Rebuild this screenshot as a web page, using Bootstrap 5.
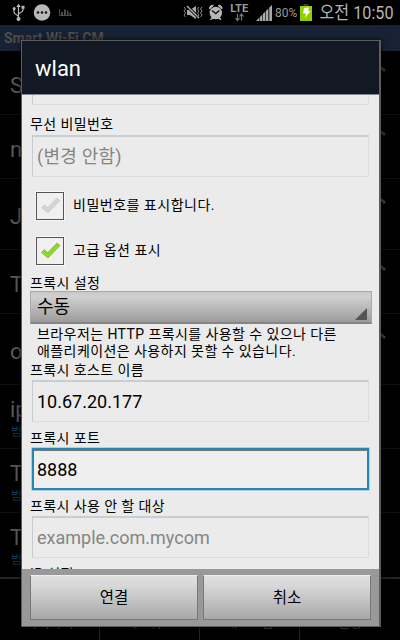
<!DOCTYPE html>
<html lang="ko">
<head>
<meta charset="utf-8">
<meta name="viewport" content="width=device-width, initial-scale=1">
<title>wlan</title>
<link href="https://cdn.jsdelivr.net/npm/bootstrap@5.3.0/dist/css/bootstrap.min.css" rel="stylesheet">
<style>
body{width:400px;height:640px;background:#000;font-family:Roboto,"Noto Sans CJK KR",sans-serif;color:#000}
.screen{width:400px;height:640px}
.status{height:25px;color:#b4b4b4;flex:none}
.status svg{flex:none;display:block}
.alerts{margin-left:102px}
.pct{font-size:12px;line-height:25px;width:23px;margin-left:3px;color:#999;padding-top:1px}
.batt{margin-left:2px}
.clock{font-size:18px;line-height:25px;margin-left:7px;white-space:nowrap}
.appbar{height:26px;background:#172334;color:#504e4b;font-size:14px;font-weight:700;line-height:26px;padding-left:4px;flex:none}
.net{height:64px;border-bottom:1px solid #111;padding:6px 0 0 10px;color:#5b5b5b;font-size:22px;line-height:24px;flex:none}
.net.tall{height:71px}
.net small{font-size:12px;line-height:20px;color:#0d3d56;padding-left:1px}
.sig{width:6px;height:6px;margin-right:13px;margin-top:-33px}
.tabs{border-top:2px solid #242424;color:#444;font-size:13px}
.tabs>div{padding-top:34px;line-height:20px;border-right:1px solid #242424}
.tabs>div:last-child{border:0}
.dialog{left:21px;top:40px;width:360px;height:587px;border:1px solid #5c5c5c;border-right-width:2px;background:#ebebeb;box-shadow:0 0 7px rgba(0,0,0,.75)}
.dhead{height:54px;background:#121925;color:#fff;font-size:22px;line-height:56px;padding-left:13px;border-bottom:1px solid #85878d;flex:none}
.dbody{flex:1 1 0;min-height:0;overflow:hidden;padding-left:8px}
.lbl{font-size:14px;line-height:16px;height:18px;white-space:nowrap;letter-spacing:.4px}
.lbl.first{margin-top:11px;height:19px;line-height:17px}
.lbl.drop{line-height:20px}
.lbl.host{margin-top:3px}
.fld{width:337px;height:42px;margin-left:2px;border:1px solid #dcdddf;border-top:2px solid #c9ced2;border-left-color:#c5cbd0;background:#ebebeb;font-size:18px;line-height:40px;padding-left:4px;white-space:nowrap}
.fld.stub{height:10px;border-top:0}
.fld.hint{color:#858585}
.fld.ko{letter-spacing:.25px}
.fld.active{background:#efefef;border:2px solid #2585b5;box-shadow:inset 0 1px #777,0 0 0 .5px #72b8d6;line-height:39px;padding-left:3px}
.checks{margin-top:6px}
.chk{height:45px;padding:8px 0 8px 6px;font-size:14px;letter-spacing:.5px}
.box{width:28px;height:28px;border:1px solid #555;background:#f0f0f0;box-shadow:0 0 0 1px #f8f8f8;margin-right:9px}
.box svg{display:block}
.sel{width:342px;height:33px;background:linear-gradient(#c9c9c9,#d0d0d0 15%,#9c9c9c);border:1px solid #aaa;border-bottom:2px solid #858585;font-size:18px;line-height:31px;padding:0 4px 0 6px}
.sel svg{margin-bottom:2px}
.help{font-size:14px;line-height:16.5px;margin:2px 0 0 7px;white-space:nowrap;letter-spacing:.42px}
.dfoot{height:57px;background:#999;padding:6px 8px 7px;gap:5px;flex:none}
.key{flex:1;height:45px;border:1px solid #777;border-top-color:#eee;border-radius:0;background:linear-gradient(#e0e0e0,#d6d6d6 25%,#a8a8a8);font-size:15.5px;line-height:45px;padding:0;color:#000}
</style>
</head>
<body>
<div class="screen position-relative overflow-hidden d-flex flex-column">
  <div class="status d-flex align-items-center">
    <svg width="80" height="25" viewBox="0 0 80 25" fill="none">
      <path d="M18.500 5v14M18.500 17c0-2.500-4.500-2-4.500-5V9M18.500 14.500c0-2 4.500-1.500 4.500-4.500V8" stroke="#b8b8b8" stroke-width="1.200"/>
      <path d="M16.300 7l2.200-3.200L20.700 7zM21.500 5.800h3v3h-3z" fill="#b8b8b8"/><circle cx="14.200" cy="8.500" r="1.500" fill="#b8b8b8"/><circle cx="18.500" cy="19" r="2" fill="#b8b8b8"/>
      <circle cx="42" cy="12.500" r="8.300" fill="#b8b8b8"/><circle cx="38" cy="12.500" r="1.300" fill="#151515"/><circle cx="42" cy="12.500" r="1.300" fill="#151515"/><circle cx="46" cy="12.500" r="1.300" fill="#151515"/>
      <path d="M59.500 9v6.500H72" stroke="#4c4c4c"/><path d="M61 12h2v3h-2zM64 9.500h2V15h-2zM67 10.500h1.500V15H67zM69.500 12.500H71V15h-1.500z" fill="#4c4c4c"/>
    </svg>
    <svg class="alerts" width="90" height="25" viewBox="182 0 90 25" fill="none">
      <path d="M187 10h3l6-4v13l-6-4h-3z" fill="#aaa"/><path d="M187 6l12 12" stroke="#000" stroke-width="3"/><path d="M187 6l12 12" stroke="#aaa" stroke-width="1.400"/>
      <path d="M184 7l1.500 2-1.500 2 1.500 2-1.500 2 1.500 2M199 7l-1.500 2 1.500 2-1.500 2 1.500 2-1.500 2M202 7l-1.500 2 1.500 2-1.500 2 1.500 2-1.500 2" stroke="#888"/>
      <circle cx="215.800" cy="13" r="6.200" fill="#b8b8b8"/><path d="M209.500 9a3 3 0 0 1 4-3.500zM222 9a3 3 0 0 0-4-3.500zM210.500 19.500l2-2.500 2 1zM221 19.500l-2-2.500-2 1z" fill="#b8b8b8" stroke="#b8b8b8"/><path d="M212 10.500l3.800 3 3.500-3" stroke="#151515" stroke-width="1.500"/>
      <text x="230.300" y="11.800" font-size="11.500" font-weight="700" fill="#999" font-family="Roboto" textLength="18" lengthAdjust="spacingAndGlyphs">LTE</text>
      <path d="M237.500 14v6M235.500 18l2 2.500 2-2.500M241.500 20.500v-6M239.500 16.500l2-2.500 2 2.500" stroke="#777" stroke-width="1.200"/>
      <path d="M256 21l16-16v16z" fill="#444"/><path d="M256 21l3-3v3zM260 21v-4l2-2v6zM263 21v-7l2-2v9zM266 21V11l2-2v12zM269.500 21V7.500L272 5v16z" fill="#aaa"/>
    </svg>
    <span class="pct">80%</span>
    <svg width="12" height="25" viewBox="0 0 12 25" class="batt"><path d="M3.500 4h5v2h-5z" fill="#383838"/><path d="M0 6h12v15H0z" fill="#8fd100"/><path d="M4 8l5-.5-1 3.500h2.500L5 18l1-4.500H3z" fill="#fff"/></svg>
    <span class="clock"><svg width="76" height="25" viewBox="0 0 76 25" fill="#b4b4b4" font-size="18"><text x="0.500" y="18.500" textLength="74" lengthAdjust="spacingAndGlyphs">오전 10:50</text></svg></span>
  </div>
  <div class="appbar">Smart Wi-Fi CM</div>
  <div class="net d-flex align-items-center justify-content-between">S<svg class="sig" viewBox="0 0 6 6"><path d="M0 0l5 4-2 2-3-3z" fill="#363d18"/></svg></div>
  <div class="net d-flex align-items-center justify-content-between">n<svg class="sig" viewBox="0 0 6 6"><path d="M0 0l5 4-2 2-3-3z" fill="#363d18"/></svg></div>
  <div class="net tall d-flex align-items-center justify-content-between">J<svg class="sig" viewBox="0 0 6 6"><path d="M0 0l5 4-2 2-3-3z" fill="#444"/></svg></div>
  <div class="net d-flex align-items-center justify-content-between">T<svg class="sig" viewBox="0 0 6 6"><path d="M0 0l5 4-2 2-3-3z" fill="#444"/></svg></div>
  <div class="net tall d-flex align-items-center justify-content-between">o<svg class="sig" viewBox="0 0 6 6"><path d="M0 0l5 4-2 2-3-3z" fill="#444"/></svg></div>
  <div class="net d-flex flex-column justify-content-center">ip<small>범</small></div>
  <div class="net d-flex flex-column justify-content-center">T<small>범</small></div>
  <div class="net border-0 d-flex flex-column justify-content-center">T<small>범</small></div>
  <div class="tabs flex-grow-1 d-flex text-center"><div class="flex-fill w-25">와이파이</div><div class="flex-fill w-25">네트워크</div><div class="flex-fill w-25">새로고침</div><div class="flex-fill w-25">설정</div></div>

  <div class="dialog position-absolute d-flex flex-column" role="dialog">
    <div class="dhead">wlan</div>
    <div class="dbody">
      <div class="fld stub"></div>
      <div class="lbl first">무선 비밀번호</div>
      <div class="fld hint ko">(변경 안함)</div>
      <div class="checks">
        <div class="chk d-flex align-items-center"><span class="box"><svg width="26" height="26" viewBox="0 0 26 26"><path d="M4.500 14.500l3-3 3 3.300L20 5l3 2.500L11 20z" fill="#d5d5d5" stroke="#c2c2c2" stroke-width=".6"/></svg></span><span>비밀번호를 표시합니다.</span></div>
        <div class="chk d-flex align-items-center"><span class="box"><svg width="26" height="26" viewBox="0 0 26 26"><path d="M4.500 14.500l3-3 3 3.300L20 5l3 2.500L11 20z" fill="#8edb25" stroke="#7a9a50" stroke-width=".6"/></svg></span><span>고급 옵션 표시</span></div>
      </div>
      <div class="lbl drop">프록시 설정</div>
      <div class="sel d-flex justify-content-between align-items-end"><span>수동</span><svg width="12" height="12" viewBox="0 0 12 12"><path d="M12 0v12H0z" fill="#555"/></svg></div>
      <div class="help">브라우저는 HTTP 프록시를 사용할 수 있으나 다른<br>애플리케이션은 사용하지 못할 수 있습니다.</div>
      <div class="lbl host">프록시 호스트 이름</div>
      <div class="fld">10.67.20.177</div>
      <div class="lbl mt-2">프록시 포트</div>
      <div class="fld active">8888</div>
      <div class="lbl mt-2">프록시 사용 안 할 대상</div>
      <div class="fld hint">example.com.mycom</div>
      <div class="lbl mt-2">IP 설정</div>
    </div>
    <div class="dfoot d-flex"><button class="btn key">연결</button><button class="btn key">취소</button></div>
  </div>
</div>
<script src="https://cdn.jsdelivr.net/npm/bootstrap@5.3.0/dist/js/bootstrap.bundle.min.js"></script>
</body>
</html>
